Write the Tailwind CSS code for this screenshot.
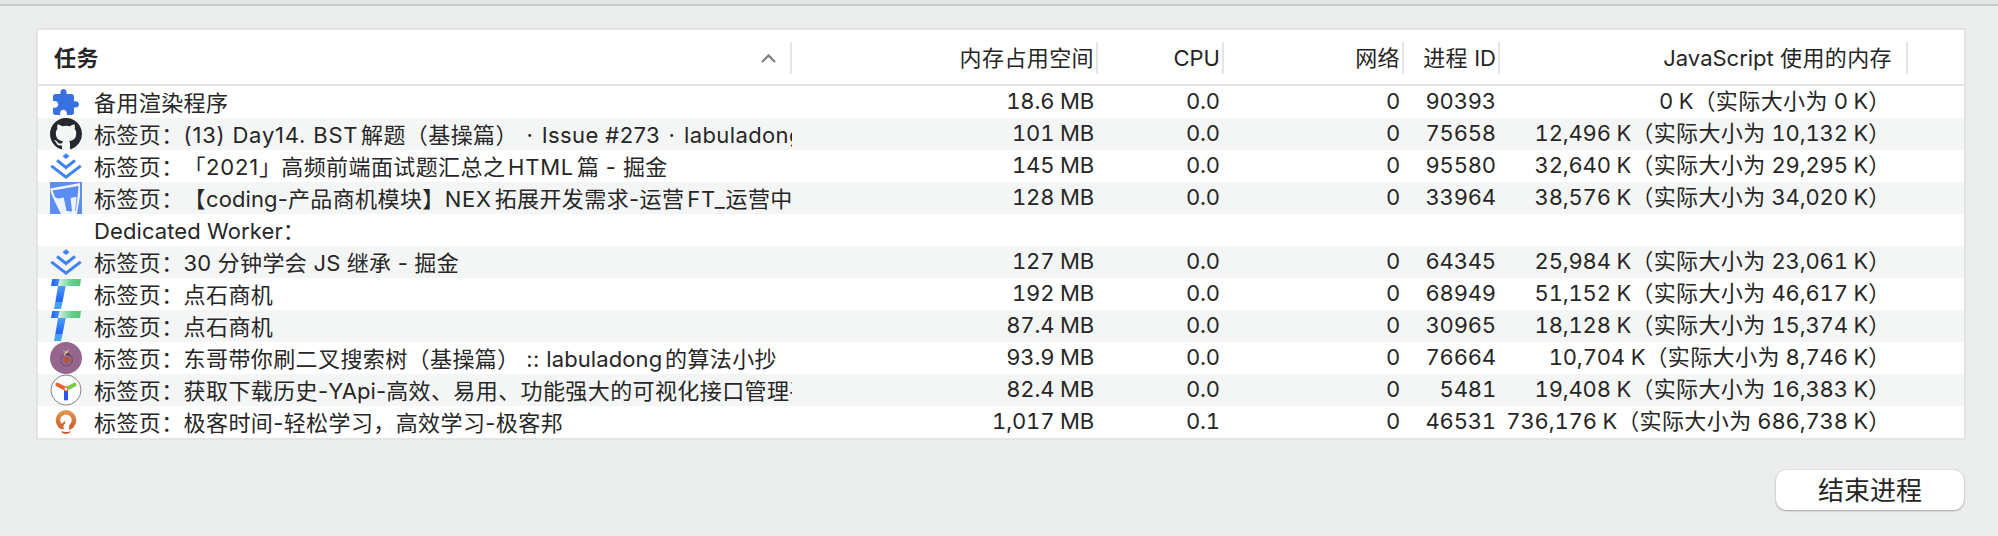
<!DOCTYPE html>
<html lang="zh-CN">
<head>
<meta charset="utf-8">
<title>任务管理器</title>
<script src="https://cdn.jsdelivr.net/npm/@tailwindcss/browser@4"></script>
</head>
<body class="w-[1998px] h-[536px] overflow-hidden bg-[#ebedec] text-[#262626] font-['Inter','Noto_Sans_CJK_SC',sans-serif] text-[22px] tracking-[0.4px] [text-spacing-trim:space-all] [text-autospace:normal] flex flex-col">
<svg class="absolute size-0">
  <symbol id="puzzle" viewBox="-0.4 -1.4 25.85 25.85"><path fill="#3871e0" d="M20.5 11H19V7c0-1.1-.9-2-2-2h-4V3.500C13 2.120 11.880 1 10.500 1S8 2.120 8 3.500V5H4c-1.100 0-1.990.9-1.990 2v3.800H3.500c1.490 0 2.700 1.210 2.700 2.700s-1.210 2.700-2.700 2.700H2V20c0 1.100.9 2 2 2h3.800v-1.500c0-1.490 1.210-2.700 2.700-2.700 1.490 0 2.700 1.210 2.700 2.700V22H17c1.100 0 2-.9 2-2v-4h1.500c1.380 0 2.500-1.120 2.500-2.500S21.880 11 20.500 11z"/></symbol>
  <symbol id="github" viewBox="0 0 16 16"><path fill="#24292f" d="M8 0C3.580 0 0 3.580 0 8c0 3.540 2.290 6.530 5.470 7.590.4.070.55-.17.55-.38 0-.19-.01-.82-.01-1.490-2.010.37-2.530-.49-2.690-.94-.09-.23-.48-.94-.82-1.130-.28-.15-.68-.52-.01-.53.63-.01 1.080.58 1.230.82.72 1.210 1.870.87 2.330.66.07-.52.28-.87.51-1.070-1.780-.2-3.640-.89-3.640-3.950 0-.87.31-1.590.82-2.150-.08-.2-.36-1.020.08-2.120 0 0 .67-.21 2.200.82.64-.18 1.320-.27 2-.27s1.360.09 2 .27c1.530-1.040 2.200-.82 2.200-.82.44 1.100.16 1.920.08 2.120.51.56.82 1.270.82 2.150 0 3.070-1.870 3.750-3.650 3.950.29.25.54.73.54 1.480 0 1.070-.01 1.930-.01 2.200 0 .21.15.46.55.38A8.010 8.010 0 0 0 16 8c0-4.420-3.580-8-8-8z"/></symbol>
  <symbol id="juejin" viewBox="0 0 32 32"><path fill="#3f80fb" d="M16 3.300l3.500 2.900L16 9l-3.500-2.800z"/><path fill="none" stroke="#3f80fb" stroke-width="3" d="M7 10.300l9 7.200 9-7.200M1.300 15.900L16 27.200l14.700-11.300"/></symbol>
  <symbol id="tee" viewBox="0 0 32 32"><path fill="#5b8df2" d="M0 0h32v32H0z"/><path fill="#eef3fe" d="M0 6.500L30 1V14l-3 18H11L8 26 5 20 1 11z"/><path fill="#5b8df2" d="M2.500 8.500L28.500 4l-.6 7L26 28l-2.500 3h-9.500L12 27 8 20 5 15z"/><path fill="#eef3fe" d="M4 15l5 1.500 4.500-2 2 8L17 29l5 .5-1.500-13.500 6-1.200-.5 7-1.200 9.200H13L10 26z"/><path fill="#5b8df2" d="M5 10l21-3.500-.6 6.500-5.400 1L21.500 28l-5 1-2.500-13.500-6.500 1z"/></symbol>
  <linearGradient id="g1"><stop offset="0" stop-color="#d3f3e2"/><stop offset=".6" stop-color="#63cf8f"/><stop offset="1" stop-color="#55c775"/></linearGradient>
  <linearGradient id="g2" x2="0" y2="1"><stop offset="0" stop-color="#4a9df8"/><stop offset="1" stop-color="#2460fa"/></linearGradient>
  <linearGradient id="g3"><stop offset="0" stop-color="#1f5cf7"/><stop offset="1" stop-color="#4b94fa"/></linearGradient>
  <symbol id="dianshi" viewBox="0 0 32 32"><path fill="url(#g1)" d="M10.500 1H31l-1 7H8.500z"/><path fill="url(#g3)" d="M2.300 1h7.500L8 8H1z"/><path fill="url(#g2)" d="M8 8h7.700l-3.200 16H5.300z"/><path fill="#45a4fa" d="M5.300 24h7.300L11 31H4z"/></symbol>
  <symbol id="avatar" viewBox="0 0 32 32"><circle cx="16" cy="16" r="16" fill="#97668f"/><circle cx="16.500" cy="18" r="5.800" fill="none" stroke="#5c4450" stroke-width="1.100" stroke-dasharray="1.500 .7"/><circle cx="16.800" cy="17.800" r="3" fill="#b5562f"/><path d="M12.500 7.500l3 2.500 3.500-2.700-1.500 4 3 3.200-4-1.500-2.700.2 1.200-2.400z" fill="#d8c9a8"/><path d="M15 12.500l3-2 2.800 4-3-1z" fill="#4c3a3c"/></symbol>
  <symbol id="yapi" viewBox="0 0 32 32"><circle cx="16" cy="16" r="15" fill="#fbfcfc" stroke="#858585" stroke-width="1"/><g stroke-width="4" stroke-linecap="round"><path stroke="#2c55ee" stroke-linecap="butt" d="M16 16v10.300"/><path stroke="#78cb45" d="M16 15l8.500-4.300"/><path stroke="#f0602f" d="M16 15L7.500 10.700"/></g><rect x="14.200" y="13.200" width="3.600" height="3.600" rx="1" fill="#fff" stroke="#f0602f" stroke-width="1"/></symbol>
  <linearGradient id="g4" x2="0" y2="1"><stop offset="0" stop-color="#e29a4d"/><stop offset="1" stop-color="#c9562a"/></linearGradient>
  <symbol id="geek" viewBox="0 0 32 32"><circle cx="16" cy="14.300" r="10.300" fill="url(#g4)"/><circle cx="16" cy="14.300" r="5.700" fill="#fff"/><path fill="#cf6a33" d="M9 20l6.500-5.500V24l-4-.8z"/><path fill="#fff" d="M15.500 13l3.700 1.500V26h-7.500l-2-2.500 4.500-.5c-1.300-1.500-1-4 1.300-6z"/><path fill="#c9562a" d="M11 25.200c3 1 7.500 1 10 0-1.500 3.500-8.500 3.500-10 0z"/></symbol>
</svg>
<div class="h-[6px] shrink-0 bg-[#e4e5e7] border-b-2 border-[#c9cacc]"></div>
<main class="mt-[22px] ml-9 w-[1930px] border-2 border-[#e3e4e4] bg-white">
  <header class="grid grid-cols-[754px_306px_126px_180px_96px_408px] h-14 border-b-2 border-[#e3e4e4] pt-3">
    <div class="h-8 border-r-2 border-[#e3e4e4] flex items-center justify-between pl-4 pr-[14px]"><span class="font-bold">任务</span><svg class="w-[15px] h-[9px]" viewBox="0 0 15 9" fill="none" stroke="#7d7d7d" stroke-width="2.200"><path d="M1 8l6.500-6.500L14 8"/></svg></div>
    <div class="h-8 border-r-2 border-[#e3e4e4] flex items-center justify-end pr-[2px]">内存占用空间</div>
    <div class="h-8 border-r-2 border-[#e3e4e4] flex items-center justify-end pr-[2px] tracking-normal">CPU</div>
    <div class="h-8 border-r-2 border-[#e3e4e4] flex items-center justify-end pr-[2px]">网络</div>
    <div class="h-8 border-r-2 border-[#e3e4e4] flex items-center justify-end pr-[2px]"><span class="whitespace-pre">进程<span class="tracking-normal"> ID</span></span></div>
    <div class="h-8 border-r-2 border-[#e3e4e4] flex items-center justify-end pr-[14px]"><span class="whitespace-pre"><span class="tracking-normal">JavaScript </span>使用的内存</span></div>
  </header>
  <div id="rows"></div>
</main>
<footer class="mt-[30px] pr-[34px] flex justify-end"><button class="w-[188px] h-10 rounded-[10px] bg-white shadow-[0_1px_2px_rgba(0,0,0,.3),0_0_1px_rgba(0,0,0,.25)] text-[26px] tracking-normal">结束进程</button></footer>
<script>
const dot = '<span class="px-[2px]">·</span>';
const latin = t => `<span class="tracking-[0.1px]">${t}</span>`;
const wide = t => `<span class="tracking-[0.8px]">${t}</span>`;
const rows = [
  ['puzzle', '备用渲染程序', '18.6 MB', '0.0', '0', '90393', '0 K（实际大小为 0 K）'],
  ['github', `标签页：${wide('(13) Day14. BST')}解题（基操篇） ${dot} Issue #273 ${dot} labuladong`, '101 MB', '0.0', '0', '75658', '12,496 K（实际大小为 10,132 K）'],
  ['juejin', `标签页：「${wide('2021')}」高频前端面试题汇总之${wide('HTML')}篇 - 掘金`, '145 MB', '0.0', '0', '95580', '32,640 K（实际大小为 29,295 K）'],
  ['tee', `标签页：【${latin('coding-')}产品商机模块】${wide('NEX')}拓展开发需求-运营${wide('FT_')}运营中`, '128 MB', '0.0', '0', '33964', '38,576 K（实际大小为 34,020 K）'],
  ['', `${latin('Dedicated Worker')}：`, '', '', '', '', ''],
  ['juejin', `标签页：${latin('30 ')}分钟学会${latin(' JS ')}继承${latin(' - ')}掘金`, '127 MB', '0.0', '0', '64345', '25,984 K（实际大小为 23,061 K）'],
  ['dianshi', '标签页：点石商机', '192 MB', '0.0', '0', '68949', '51,152 K（实际大小为 46,617 K）'],
  ['dianshi', '标签页：点石商机', '87.4 MB', '0.0', '0', '30965', '18,128 K（实际大小为 15,374 K）'],
  ['avatar', `标签页：东哥带你刷二叉搜索树（基操篇） :: ${latin('labuladong')}的算法小抄`, '93.9 MB', '0.0', '0', '76664', '10,704 K（实际大小为 8,746 K）'],
  ['yapi', `标签页：获取下载历史${latin('-YApi-')}高效、易用、功能强大的可视化接口管理平`, '82.4 MB', '0.0', '0', '5481', '19,408 K（实际大小为 16,383 K）'],
  ['geek', '标签页：极客时间-轻松学习，高效学习-极客邦', '1,017 MB', '0.1', '0', '46531', '736,176 K（实际大小为 686,738 K）'],
];
const memory = t => t.replace('（实际大小为', '<span class="tracking-[0.4px]">（实际大小为</span>');
document.getElementById('rows').innerHTML = rows.map(([icon, name, ...v]) => `
  <div class="grid grid-cols-[754px_306px_126px_180px_96px_408px] h-8 even:bg-[#f4f6f5] leading-8 whitespace-pre">
    <div class="flex gap-3 pl-3 overflow-hidden"><svg class="size-8 shrink-0">${icon ? `<use href="#${icon}"/>` : ''}</svg><span class="pt-px">${name}</span></div>
    ${v.map((t, i) => `<div class="${i === 4 ? 'text-right pr-[18px] -mt-px tabular-nums tracking-[-0.15px]' : 'text-right pr-1 -mt-px tabular-nums tracking-[-0.15px]'}">${memory(t)}</div>`).join('')}
  </div>`).join('');
</script>
</body>
</html>
